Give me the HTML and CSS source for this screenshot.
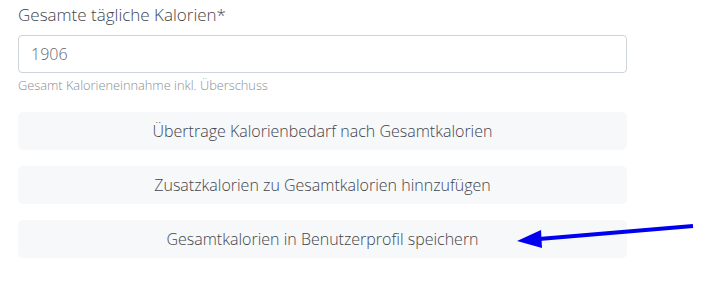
FILE: index.html
```html
<!doctype html>
<html lang="de">
  <head>
    <meta charset="UTF-8" />
    <meta name="viewport" content="width=device-width, initial-scale=1.0" />
    <title>Gesamtkalorien</title>
    <link rel="stylesheet" href="styles.css">
  </head>
  <body>
    <div class="form-group">
      <label class="form-label" for="total-calories">Gesamte tägliche Kalorien*</label>
      <input id="total-calories" class="form-input" type="text" value="1906" />
      <div class="form-hint">Gesamt Kalorieneinnahme inkl. Überschuss</div>
    </div>

    <div class="actions">
      <button class="action-btn">Übertrage Kalorienbedarf nach Gesamtkalorien</button>
      <button class="action-btn">Zusatzkalorien zu Gesamtkalorien hinnzufügen</button>
      <div class="action-row">
        <button class="action-btn">Gesamtkalorien in Benutzerprofil speichern</button>
        <svg class="pointer-arrow" width="190" height="30" viewBox="0 0 190 30">
          <line x1="184" y1="3" x2="30" y2="16" stroke="#0000f0" stroke-width="4" />
          <polygon points="8,18 32,7 33,25" fill="#0000f0" />
        </svg>
      </div>
    </div>
  </body>
</html>
```

FILE: styles.css
```css
body {
  margin: 0;
  padding: 2px 98px 0 18px;
  font-family: 'Open Sans', 'Segoe UI', sans-serif;
  font-weight: 300;
  background: #fff;
  color: #495057;
}

.form-group {
  display: flex;
  flex-direction: column;
}

.form-label {
  font-size: 17px;
  line-height: 25px;
  color: #3f454b;
  margin-bottom: 8px;
}

.form-input {
  box-sizing: border-box;
  height: 38px;
  padding: 0 12px;
  border: 1px solid #ced4da;
  border-radius: 4px;
  font-family: inherit;
  font-weight: 300;
  font-size: 16px;
  color: #5f666d;
  background: #fff;
  outline: none;
}

.form-hint {
  margin-top: 4px;
  font-size: 12.8px;
  line-height: 17px;
  color: #868e96;
}

.actions {
  display: flex;
  flex-direction: column;
  gap: 16px;
  margin-top: 18px;
}

.action-row {
  position: relative;
}

.action-btn {
  display: block;
  width: 100%;
  height: 38px;
  border: none;
  border-radius: 5px;
  background: #f7f8fa;
  color: #3f454b;
  font-family: inherit;
  font-weight: 300;
  font-size: 16px;
  cursor: pointer;
}

.pointer-arrow {
  position: absolute;
  left: 491px;
  top: 3px;
}
```
